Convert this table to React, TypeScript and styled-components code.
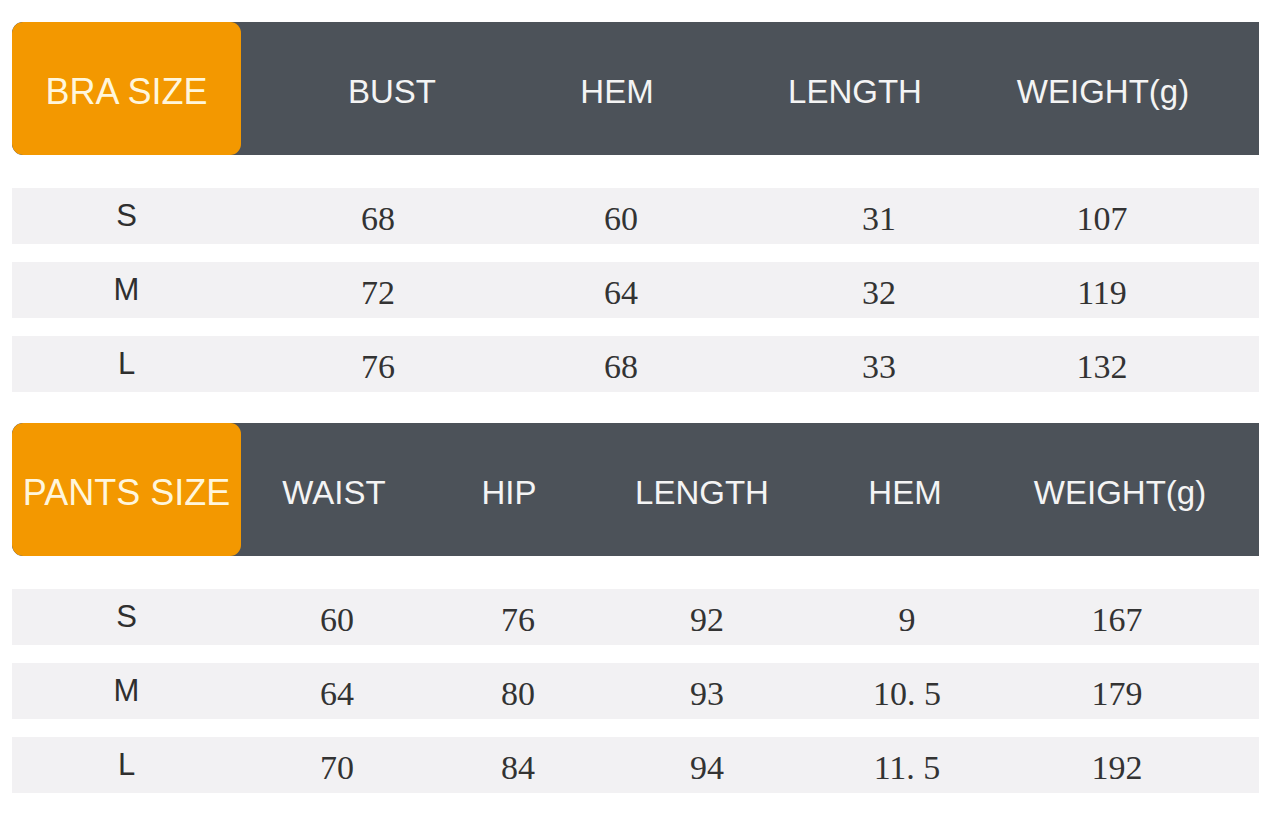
import styled, { createGlobalStyle } from 'styled-components'

const GlobalStyle = createGlobalStyle`
  html, body {
    margin: 0;
    padding: 0;
    background: #fff;
  }
  body {
    font-family: 'Liberation Sans', Arial, sans-serif;
  }
`

// column widths picked so that every cell centre lands where the chart has it
const cols = {
  braHead: '229px 302px 148px 328px 168px 1fr',
  braRow: '229px 274px 212px 304px 142px 1fr',
  pantsHead: '229px 186px 164px 222px 184px 246px 1fr',
  pantsRow: '229px 192px 170px 208px 192px 228px 1fr',
}

const Page = styled.div`
  width: 1280px;
  height: 813px;
  padding: 22px 21px 0 12px;
  box-sizing: border-box;
  display: flex;
  flex-direction: column;
`

const Table = styled.div`
  display: flex;
  flex-direction: column;
  gap: 18px;
  & + & {
    margin-top: 31px;
  }
`

const HeadRow = styled.div<{ $cols: string }>`
  display: grid;
  grid-template-columns: ${(p) => p.$cols};
  height: 133px;
  background: #4c5259;
  border-radius: 11px 0 0 11px;
  overflow: hidden;
  margin-bottom: 15px;
`

const Label = styled.div`
  display: flex;
  align-items: center;
  justify-content: center;
  padding-top: 6px;
  background: #f39800;
  border-radius: 11px;
  color: #fff6dc;
  font-size: 36px;
  white-space: nowrap;
`

const HeadCell = styled.div`
  display: flex;
  align-items: center;
  justify-content: center;
  padding-top: 6px;
  color: #f4f4f4;
  font-size: 33px;
  white-space: nowrap;
`

const Row = styled.div<{ $cols: string }>`
  display: grid;
  grid-template-columns: ${(p) => p.$cols};
  height: 56px;
  background: #f2f1f3;
`

const SizeCell = styled.div`
  display: flex;
  align-items: center;
  justify-content: center;
  color: #2f2f2f;
  font-size: 31px;
`

const Value = styled.div`
  display: flex;
  align-items: center;
  justify-content: center;
  padding-top: 5px;
  color: #333;
  font-family: 'Liberation Serif', 'Times New Roman', serif;
  font-size: 34px;
  white-space: pre;
`

type Chart = {
  label: string
  head: string[]
  headCols: string
  rowCols: string
  rows: [string, ...string[]][]
}

const charts: Chart[] = [
  {
    label: 'BRA SIZE',
    head: ['BUST', 'HEM', 'LENGTH', 'WEIGHT(g)'],
    headCols: cols.braHead,
    rowCols: cols.braRow,
    rows: [
      ['S', '68', '60', '31', '107'],
      ['M', '72', '64', '32', '119'],
      ['L', '76', '68', '33', '132'],
    ],
  },
  {
    label: 'PANTS SIZE',
    head: ['WAIST', 'HIP', 'LENGTH', 'HEM', 'WEIGHT(g)'],
    headCols: cols.pantsHead,
    rowCols: cols.pantsRow,
    rows: [
      ['S', '60', '76', '92', '9', '167'],
      ['M', '64', '80', '93', '10. 5', '179'],
      ['L', '70', '84', '94', '11. 5', '192'],
    ],
  },
]

export default function App() {
  return (
    <>
      <GlobalStyle />
      <Page>
        {charts.map((chart) => (
          <Table key={chart.label}>
            <HeadRow $cols={chart.headCols}>
              <Label>{chart.label}</Label>
              {chart.head.map((h) => (
                <HeadCell key={h}>{h}</HeadCell>
              ))}
            </HeadRow>
            {chart.rows.map(([size, ...values]) => (
              <Row key={size} $cols={chart.rowCols}>
                <SizeCell>{size}</SizeCell>
                {values.map((v, i) => (
                  <Value key={i}>{v}</Value>
                ))}
              </Row>
            ))}
          </Table>
        ))}
      </Page>
    </>
  )
}
